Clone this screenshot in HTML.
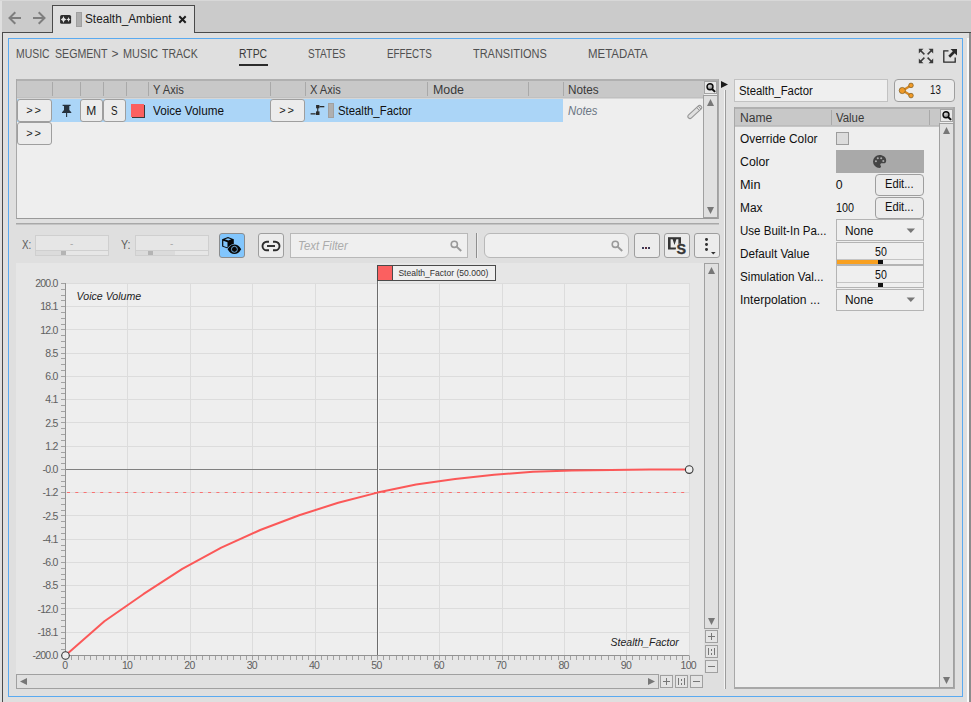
<!DOCTYPE html>
<html><head><meta charset="utf-8"><title>Stealth_Ambient - RTPC</title>
<style>
html,body{margin:0;padding:0;}
body{width:971px;height:702px;overflow:hidden;background:#dfdfdf;font-family:"Liberation Sans",sans-serif;position:relative;}
#r{position:absolute;left:0;top:0;width:971px;height:702px;overflow:hidden;}
#r div,#r svg{position:absolute;}
</style></head><body><div id="r">
<div style="left:2px;top:0px;width:969px;height:32px;background:#cbcbcb;"></div>
<div style="left:0px;top:0px;width:971px;height:1px;background:#d8d8d8;"></div>
<div style="left:2px;top:32px;width:969px;height:1px;background:#4a4a4a;"></div>
<div style="left:2px;top:32px;width:1px;height:670px;background:#4a4a4a;"></div>
<div style="left:52px;top:5px;width:143px;height:28px;background:#dfdfdf;border:1px solid #4a4a4a;border-bottom:none;box-sizing:border-box;"></div>
<div style="left:967px;top:38px;width:2px;height:664px;background:#fafafa;"></div>
<div style="left:969px;top:33px;width:2px;height:669px;background:#8c8c8c;"></div>
<div style="left:8px;top:38px;width:955px;height:659px;border:1px solid #5aaaf0;box-sizing:border-box;"></div>
<svg style="left:8px;top:10px" width="40" height="18" viewBox="0 0 40 18"><g fill="none" stroke="#7e7e7e" stroke-width="2" stroke-linecap="butt" stroke-linejoin="miter"><path d="M13 8H2M7.300 2.200L1.500 8l5.800 5.800"/><path d="M25 8h11M30.700 2.200L36.500 8l-5.800 5.800"/></g></svg>
<svg style="left:60px;top:15px" width="12" height="9" viewBox="0 0 12 9"><rect x="0.100" y="0" width="11" height="8.800" rx="1.600" fill="#2c2c2c"/><path d="M3.450 0.900Q3.950 3.900 6.300 4.450Q3.950 5 3.450 7.900Q2.950 5 0.800 4.450Q2.950 3.900 3.450 0.900Z" fill="#e2e2e2"/><path d="M8.650 2Q9 4.100 10.400 4.450Q9 4.800 8.650 6.900Q8.300 4.800 6.300 4.450Q8.300 4.100 8.650 2Z" fill="#e2e2e2"/></svg>
<div style="left:76px;top:12px;width:6px;height:15px;background:#afafaf;border:1px solid #a0a0a0;box-sizing:border-box;"></div>
<div style="left:85.30px;top:11.34px;height:16px;line-height:16px;font-size:12px;color:#1a1a1a;white-space:nowrap;transform:scaleX(0.9824);transform-origin:0 50%;">Stealth_Ambient</div>
<svg style="left:178px;top:15px" width="9" height="9" viewBox="0 0 9 9"><path d="M1.300 1.300L7.700 7.700M7.700 1.300L1.300 7.700" stroke="#1e1e1e" stroke-width="2" fill="none"/></svg>
<div style="left:16.40px;top:45.84px;height:16px;line-height:16px;font-size:12px;color:#505050;white-space:nowrap;transform:scaleX(0.8690);transform-origin:0 50%;">MUSIC</div>
<div style="left:54.50px;top:45.84px;height:16px;line-height:16px;font-size:12px;color:#505050;white-space:nowrap;transform:scaleX(0.8848);transform-origin:0 50%;">SEGMENT</div>
<div style="left:111.50px;top:45.84px;height:16px;line-height:16px;font-size:12px;color:#505050;white-space:nowrap;">&gt;</div>
<div style="left:122.60px;top:45.84px;height:16px;line-height:16px;font-size:12px;color:#505050;white-space:nowrap;transform:scaleX(0.9052);transform-origin:0 50%;">MUSIC</div>
<div style="left:162.00px;top:45.84px;height:16px;line-height:16px;font-size:12px;color:#505050;white-space:nowrap;transform:scaleX(0.8802);transform-origin:0 50%;">TRACK</div>
<div style="left:239.10px;top:45.84px;height:16px;line-height:16px;font-size:12px;color:#3a3a3a;white-space:nowrap;transform:scaleX(0.8660);transform-origin:0 50%;">RTPC</div>
<div style="left:239px;top:64px;width:29px;height:2px;background:#2b2b2b;"></div>
<div style="left:308.30px;top:45.84px;height:16px;line-height:16px;font-size:12px;color:#505050;white-space:nowrap;transform:scaleX(0.8353);transform-origin:0 50%;">STATES</div>
<div style="left:387.30px;top:45.84px;height:16px;line-height:16px;font-size:12px;color:#505050;white-space:nowrap;transform:scaleX(0.8177);transform-origin:0 50%;">EFFECTS</div>
<div style="left:473.30px;top:45.84px;height:16px;line-height:16px;font-size:12px;color:#505050;white-space:nowrap;transform:scaleX(0.9136);transform-origin:0 50%;">TRANSITIONS</div>
<div style="left:588.30px;top:45.84px;height:16px;line-height:16px;font-size:12px;color:#505050;white-space:nowrap;transform:scaleX(0.9527);transform-origin:0 50%;">METADATA</div>
<svg style="left:918px;top:48px" width="16" height="16" viewBox="0 0 16 16"><g fill="none" stroke="#3a3a3a" stroke-width="1.500"><path d="M1.500 1.500L6.400 6.400M14.500 1.500L9.600 6.400M1.500 14.500L6.400 9.600M14.500 14.500L9.600 9.600"/></g><g fill="#3a3a3a"><path d="M0.800 0.800h4.700l-4.700 4.700z"/><path d="M15.200 0.800v4.700l-4.700-4.700z"/><path d="M0.800 15.200v-4.700l4.700 4.700z"/><path d="M15.200 15.200h-4.700l4.700-4.700z"/></g></svg>
<svg style="left:942px;top:48px" width="16" height="16" viewBox="0 0 16 16"><path d="M6.500 2.800H1.800V14.200H13.200V9.500" fill="none" stroke="#2a2a2a" stroke-width="1.300"/><path d="M8.500 1H15V7.500L12.700 5.200 8.200 9.700 6.300 7.800 10.800 3.300z" fill="#2a2a2a"/></svg>
<div style="left:16px;top:79px;width:703px;height:140px;background:#eeeeee;border:1px solid #a8a8a8;border-width:1px 2px 1px 1px;border-bottom-color:#999;box-sizing:border-box;"></div>
<div style="left:17px;top:80px;width:687px;height:17px;background:#c8c8c8;"></div>
<div style="left:17px;top:97px;width:687px;height:1px;background:#c0c0c0;"></div>
<div style="left:17px;top:98px;width:687px;height:1px;background:#d6d6d6;"></div>
<div style="left:17px;top:79px;width:701px;height:2px;background:#b0b0b0;"></div>
<div style="left:52px;top:82px;width:1px;height:14px;background:#a9a9a9;"></div>
<div style="left:80px;top:82px;width:1px;height:14px;background:#a9a9a9;"></div>
<div style="left:103px;top:82px;width:1px;height:14px;background:#a9a9a9;"></div>
<div style="left:126px;top:82px;width:1px;height:14px;background:#a9a9a9;"></div>
<div style="left:148px;top:82px;width:1px;height:14px;background:#a9a9a9;"></div>
<div style="left:270px;top:82px;width:1px;height:14px;background:#a9a9a9;"></div>
<div style="left:305px;top:82px;width:1px;height:14px;background:#a9a9a9;"></div>
<div style="left:427px;top:82px;width:1px;height:14px;background:#a9a9a9;"></div>
<div style="left:528px;top:82px;width:1px;height:14px;background:#a9a9a9;"></div>
<div style="left:563px;top:82px;width:1px;height:14px;background:#a9a9a9;"></div>
<div style="left:153.30px;top:81.74px;height:16px;line-height:16px;font-size:12.3px;color:#3a3a3a;white-space:nowrap;transform:scaleX(0.9100);transform-origin:0 50%;">Y Axis</div>
<div style="left:310.20px;top:81.74px;height:16px;line-height:16px;font-size:12.3px;color:#3a3a3a;white-space:nowrap;transform:scaleX(0.9011);transform-origin:0 50%;">X Axis</div>
<div style="left:432.50px;top:81.74px;height:16px;line-height:16px;font-size:12.3px;color:#3a3a3a;white-space:nowrap;transform:scaleX(1.0076);transform-origin:0 50%;">Mode</div>
<div style="left:568.30px;top:81.74px;height:16px;line-height:16px;font-size:12.3px;color:#3a3a3a;white-space:nowrap;transform:scaleX(0.9555);transform-origin:0 50%;">Notes</div>
<div style="left:17px;top:99px;width:546px;height:23px;background:#abd5f7;"></div>
<div style="left:17px;top:99px;width:35px;height:23px;background:#ececec;border:1px solid #9e9e9e;border-radius:3px;box-sizing:border-box;"></div>
<div style="left:17px;top:122px;width:35px;height:23px;background:#ececec;border:1px solid #9e9e9e;border-radius:3px;box-sizing:border-box;"></div>
<div style="left:80px;top:99px;width:23px;height:23px;background:#ececec;border:1px solid #9e9e9e;border-radius:3px;box-sizing:border-box;"></div>
<div style="left:103px;top:99px;width:23px;height:23px;background:#ececec;border:1px solid #9e9e9e;border-radius:3px;box-sizing:border-box;"></div>
<div style="left:270px;top:99px;width:35px;height:23px;background:#ececec;border:1px solid #9e9e9e;border-radius:3px;box-sizing:border-box;"></div>
<div style="left:26.20px;top:102.99px;height:14px;line-height:14px;font-size:11px;color:#1a1a1a;white-space:nowrap;letter-spacing:1.800px;">&gt;&gt;</div>
<div style="left:26.20px;top:125.99px;height:14px;line-height:14px;font-size:11px;color:#1a1a1a;white-space:nowrap;letter-spacing:1.800px;">&gt;&gt;</div>
<div style="left:279.20px;top:102.99px;height:14px;line-height:14px;font-size:11px;color:#1a1a1a;white-space:nowrap;letter-spacing:1.800px;">&gt;&gt;</div>
<div style="left:86.30px;top:102.84px;height:16px;line-height:16px;font-size:12px;color:#1a1a1a;white-space:nowrap;">M</div>
<div style="left:111.20px;top:102.84px;height:16px;line-height:16px;font-size:12px;color:#1a1a1a;white-space:nowrap;transform:scaleX(0.82);transform-origin:0 50%;">S</div>
<svg style="left:60px;top:103px" width="13" height="15" viewBox="0 0 13 15"><path d="M2.600 1.700h8v1.400h-1.300v4l2 2.100v0.900H2V9.200l2-2.100v-4H2.600z" fill="#26323e"/><path d="M6.600 10v4" stroke="#26323e" stroke-width="1.100"/></svg>
<div style="left:132.2px;top:105.3px;width:12.6px;height:12.6px;background:#3a3a3a;"></div>
<div style="left:131.2px;top:104.3px;width:12.4px;height:12.4px;background:#fb6060;"></div>
<div style="left:153.30px;top:102.74px;height:16px;line-height:16px;font-size:12.3px;color:#101010;white-space:nowrap;transform:scaleX(0.9513);transform-origin:0 50%;">Voice Volume</div>
<svg style="left:310px;top:104px" width="16" height="12" viewBox="0 0 16 12"><g fill="#2a2a2a"><rect x="0.600" y="9.200" width="5" height="1.300"/><rect x="6.100" y="1" width="3.300" height="3.300"/><rect x="6" y="7.400" width="3.500" height="3.600"/><rect x="7.200" y="4" width="1.100" height="4"/><rect x="9.500" y="2" width="4.800" height="1.300"/></g></svg>
<div style="left:328px;top:103px;width:6px;height:15px;background:#afafaf;border:1px solid #a0a0a0;box-sizing:border-box;"></div>
<div style="left:338.30px;top:102.74px;height:16px;line-height:16px;font-size:12.3px;color:#101010;white-space:nowrap;transform:scaleX(0.9239);transform-origin:0 50%;">Stealth_Factor</div>
<div style="left:568.00px;top:102.74px;height:16px;line-height:16px;font-size:12.3px;color:#6b7684;white-space:nowrap;transform:scaleX(0.9181);transform-origin:0 50%;font-style:italic;">Notes</div>
<svg style="left:687px;top:104px" width="16" height="16" viewBox="0 0 16 16"><g fill="#e0e0e0" stroke="#969696" stroke-width="1.100" transform="rotate(-43 7.800 8)"><rect x="-0.800" y="5.900" width="17.200" height="4.200" rx="2.100"/><path d="M12.200 5.900v4.200M14.300 5.900v4.200" fill="none" stroke-width="0.900"/></g></svg>
<div style="left:704px;top:81px;width:13px;height:13px;background:#e9e9e9;border:1px solid #a4a4a4;box-sizing:border-box;"></div>
<svg style="left:705px;top:82px" width="12" height="12" viewBox="0 0 12 12"><defs><radialGradient id="lg704" cx="0.4" cy="0.35" r="0.7"><stop offset="0" stop-color="#d8d8d8"/><stop offset="1" stop-color="#777"/></radialGradient></defs><path d="M6.800 6.700l3.300 3.200" stroke="#0a0a0a" stroke-width="2"/><circle cx="5" cy="4.700" r="3" fill="url(#lg704)" stroke="#0a0a0a" stroke-width="1.400"/></svg>
<div style="left:703px;top:95px;width:15px;height:123px;background:#e0e0e0;border:1px solid #a0a0a0;box-sizing:border-box;"></div>
<svg style="left:707.0px;top:99px" width="8" height="8" viewBox="0 0 8 8"><polygon points="0,7 3.5,0 7,7" fill="#777"/></svg>
<svg style="left:707.0px;top:207px" width="8" height="8" viewBox="0 0 8 8"><polygon points="0,0 7,0 3.5,7" fill="#777"/></svg>
<svg style="left:720px;top:80px" width="9" height="10" viewBox="0 0 9 10"><polygon points="1,1 8,4.500 1,8" fill="#1a1a1a"/></svg>
<div style="left:725px;top:90px;width:1px;height:599px;background:#9c9c9c;"></div>
<div style="left:724px;top:90px;width:1px;height:599px;background:#f4f4f4;"></div>
<div style="left:16px;top:223px;width:703px;height:1px;background:#a8a8a8;"></div>
<div style="left:16px;top:224px;width:703px;height:1px;background:#c4c4c4;"></div>
<div style="left:22.00px;top:236.74px;height:16px;line-height:16px;font-size:12.3px;color:#5c5c5c;white-space:nowrap;transform:scaleX(0.8002);transform-origin:0 50%;">X:</div>
<div style="left:121.00px;top:236.74px;height:16px;line-height:16px;font-size:12.3px;color:#5c5c5c;white-space:nowrap;transform:scaleX(0.8681);transform-origin:0 50%;">Y:</div>
<div style="left:35px;top:235px;width:74px;height:21px;background:#e6e6e6;border:1px solid #cfcfcf;box-sizing:border-box;"></div>
<div style="left:35px;top:250px;width:74px;height:1px;background:#cfcfcf;"></div>
<div style="left:36px;top:251px;width:30px;height:4px;background:#dbdbdb;"></div>
<div style="left:61px;top:251px;width:5px;height:4px;background:#b4b4b4;"></div>
<div style="left:70.00px;top:236.84px;height:13px;line-height:13px;font-size:10px;color:#aaaaaa;white-space:nowrap;">-</div>
<div style="left:135px;top:235px;width:74px;height:21px;background:#e6e6e6;border:1px solid #cfcfcf;box-sizing:border-box;"></div>
<div style="left:135px;top:250px;width:74px;height:1px;background:#cfcfcf;"></div>
<div style="left:136px;top:251px;width:39px;height:4px;background:#dbdbdb;"></div>
<div style="left:148px;top:251px;width:5px;height:4px;background:#b4b4b4;"></div>
<div style="left:170.00px;top:236.84px;height:13px;line-height:13px;font-size:10px;color:#aaaaaa;white-space:nowrap;">-</div>
<div style="left:219px;top:233px;width:26px;height:25px;background:#82c6fd;border:1px solid #8a8c8e;border-radius:3px;box-sizing:border-box;"></div>
<svg style="left:221px;top:236px" width="22" height="20" viewBox="0 0 22 20"><path d="M1.100 3.200L7 1.100l5.800 2.100v5l-5.400 4.500-6.300-2.300z" fill="#080808"/><path d="M3.800 3.300L7 2.300l3.200 1-2.800 1.100z" fill="#82c6fd"/><path d="M2.300 4.700l4.200 1.500v5.400l-4.200-1.500z" fill="#82c6fd"/><path d="M6.600 13.300c2-3.400 4.200-4.700 6.800-4.700s4.800 1.300 6.800 4.700c-2 3.400-4.200 4.700-6.800 4.700s-4.800-1.300-6.800-4.700z" fill="#080808" stroke="#82c6fd" stroke-width="1.300" paint-order="stroke"/><circle cx="13.400" cy="13.300" r="3" fill="none" stroke="#82c6fd" stroke-width="0.800"/></svg>
<div style="left:258px;top:233px;width:26px;height:25px;background:#ececec;border:1px solid #9e9e9e;border-radius:3px;box-sizing:border-box;"></div>
<svg style="left:261px;top:240px" width="20" height="12" viewBox="0 0 20 12"><g fill="none" stroke="#2c2c2c" stroke-width="1.900"><path d="M8 1.700H5.800a4.300 4.300 0 0 0 0 8.600H8"/><path d="M12 1.700h2.200a4.300 4.300 0 0 1 0 8.600H12"/><path d="M6 6h8"/></g></svg>
<div style="left:290px;top:233px;width:178px;height:25px;background:#efefef;border:1px solid #b8b8b8;box-sizing:border-box;"></div>
<div style="left:297.70px;top:237.74px;height:16px;line-height:16px;font-size:12.3px;color:#ababab;white-space:nowrap;transform:scaleX(0.9302);transform-origin:0 50%;font-style:italic;">Text Filter</div>
<svg style="left:450px;top:240px" width="13" height="12" viewBox="0 0 13 12"><circle cx="4.300" cy="4.300" r="3.100" fill="none" stroke="#9a9a9a" stroke-width="1.600"/><path d="M6.600 6.600l4.600 4.400" stroke="#9a9a9a" stroke-width="2"/></svg>
<div style="left:476px;top:233px;width:1px;height:25px;background:#8e8e8e;"></div>
<div style="left:477px;top:233px;width:1px;height:25px;background:#ececec;"></div>
<div style="left:484px;top:233px;width:145px;height:25px;background:#efefef;border:1px solid #b8b8b8;border-radius:6px;box-sizing:border-box;"></div>
<svg style="left:611px;top:240px" width="13" height="12" viewBox="0 0 13 12"><circle cx="4.300" cy="4.300" r="3.100" fill="none" stroke="#9a9a9a" stroke-width="1.600"/><path d="M6.600 6.600l4.600 4.400" stroke="#9a9a9a" stroke-width="2"/></svg>
<div style="left:634px;top:233px;width:26px;height:25px;background:#ececec;border:1px solid #9e9e9e;border-radius:3px;box-sizing:border-box;"></div>
<div style="left:664px;top:233px;width:26px;height:25px;background:#ececec;border:1px solid #9e9e9e;border-radius:3px;box-sizing:border-box;"></div>
<div style="left:694px;top:233px;width:26px;height:25px;background:#ececec;border:1px solid #9e9e9e;border-radius:3px;box-sizing:border-box;"></div>
<div style="left:642.3px;top:246.8px;width:2px;height:2px;background:#3a3a5a;"></div>
<div style="left:645.3px;top:246.8px;width:2px;height:2px;background:#5a2a3a;"></div>
<div style="left:648.3px;top:246.8px;width:2px;height:2px;background:#3a3a5a;"></div>
<svg style="left:667px;top:236px" width="20" height="19" viewBox="0 0 20 19"><path d="M1 1.200h13v12.300H1z" fill="#363636"/><path d="M3.600 3.300h2l1.900 5.600 1.900-5.600h2v8.100H3.600z" fill="#ececec"/><path d="M9.500 9.500c1-2.500 7-2.500 8.500 0.500v4.500c0 4-8.500 4-9.500 0z" fill="#ececec"/><text x="9.500" y="18" font-family="Liberation Sans, sans-serif" font-weight="bold" font-size="14.400" fill="#363636" stroke="#363636" stroke-width="0.300">S</text></svg>
<div style="left:705.0px;top:238.0px;width:2.800px;height:2.800px;border-radius:50%;background:#333"></div>
<div style="left:705.0px;top:243.1px;width:2.800px;height:2.800px;border-radius:50%;background:#333"></div>
<div style="left:705.0px;top:248.2px;width:2.800px;height:2.800px;border-radius:50%;background:#333"></div>
<svg style="left:711px;top:252px" width="5" height="3" viewBox="0 0 5 3"><polygon points="0,0 4.600,0 2.300,2.600" fill="#333"/></svg>
<div style="left:16px;top:263px;width:688px;height:411px;background:#e6e6e6;"></div>
<svg style="left:0;top:0" width="971" height="702" viewBox="0 0 971 702" font-family="Liberation Sans, sans-serif"><rect x="66" y="283" width="623.500" height="372.500" fill="#eeeeee"/><path d="M127.5 283V655M190.5 283V655M252.5 283V655M315.5 283V655M377.5 283V655M439.5 283V655M502.5 283V655M564.5 283V655M626.5 283V655M689.5 283V655M66 283.5H689.500M66 306.5H689.500M66 329.5H689.500M66 353.5H689.500M66 376.5H689.500M66 399.5H689.500M66 422.5H689.500M66 446.5H689.500M66 492.5H689.500M66 515.5H689.500M66 539.5H689.500M66 562.5H689.500M66 585.5H689.500M66 608.5H689.500M66 632.5H689.500" stroke="#dcdcdc" stroke-width="1" fill="none"/><path d="M61 283.5H65M61 289.5H65M61 295.5H65M61 300.5H65M61 306.5H65M61 312.5H65M61 318.5H65M61 324.5H65M61 329.5H65M61 335.5H65M61 341.5H65M61 347.5H65M61 353.5H65M61 358.5H65M61 364.5H65M61 370.5H65M61 376.5H65M61 382.5H65M61 388.5H65M61 393.5H65M61 399.5H65M61 405.5H65M61 411.5H65M61 417.5H65M61 422.5H65M61 428.5H65M61 434.5H65M61 440.5H65M61 446.5H65M61 452.5H65M61 457.5H65M61 463.5H65M61 469.5H65M61 475.5H65M61 481.5H65M61 486.5H65M61 492.5H65M61 498.5H65M61 504.5H65M61 510.5H65M61 515.5H65M61 521.5H65M61 527.5H65M61 533.5H65M61 539.5H65M61 545.5H65M61 550.5H65M61 556.5H65M61 562.5H65M61 568.5H65M61 574.5H65M61 579.5H65M61 585.5H65M61 591.5H65M61 597.5H65M61 603.5H65M61 608.5H65M61 614.5H65M61 620.5H65M61 626.5H65M61 632.5H65M61 638.5H65M61 643.5H65M61 649.5H65M61 655.5H65M65.5 656V660M71.5 656V660M78.5 656V660M84.5 656V660M90.5 656V660M96.5 656V660M103.5 656V660M109.5 656V660M115.5 656V660M121.5 656V660M127.5 656V660M134.5 656V660M140.5 656V660M146.5 656V660M152.5 656V660M159.5 656V660M165.5 656V660M171.5 656V660M177.5 656V660M184.5 656V660M190.5 656V660M196.5 656V660M202.5 656V660M209.5 656V660M215.5 656V660M221.5 656V660M227.5 656V660M233.5 656V660M240.5 656V660M246.5 656V660M252.5 656V660M258.5 656V660M265.5 656V660M271.5 656V660M277.5 656V660M283.5 656V660M290.5 656V660M296.5 656V660M302.5 656V660M308.5 656V660M315.5 656V660M321.5 656V660M327.5 656V660M333.5 656V660M339.5 656V660M346.5 656V660M352.5 656V660M358.5 656V660M364.5 656V660M371.5 656V660M377.5 656V660M383.5 656V660M389.5 656V660M396.5 656V660M402.5 656V660M408.5 656V660M414.5 656V660M420.5 656V660M427.5 656V660M433.5 656V660M439.5 656V660M445.5 656V660M452.5 656V660M458.5 656V660M464.5 656V660M470.5 656V660M477.5 656V660M483.5 656V660M489.5 656V660M495.5 656V660M502.5 656V660M508.5 656V660M514.5 656V660M520.5 656V660M526.5 656V660M533.5 656V660M539.5 656V660M545.5 656V660M551.5 656V660M558.5 656V660M564.5 656V660M570.5 656V660M576.5 656V660M583.5 656V660M589.5 656V660M595.5 656V660M601.5 656V660M608.5 656V660M614.5 656V660M620.5 656V660M626.5 656V660M632.5 656V660M639.5 656V660M645.5 656V660M651.5 656V660M657.5 656V660M664.5 656V660M670.5 656V660M676.5 656V660M682.5 656V660M689.5 656V660" stroke="#a2a2a2" stroke-width="1" fill="none"/><path d="M65.500 283V655.500H689.500" stroke="#939393" stroke-width="1" fill="none"/><path d="M66 469.500H689" stroke="#808080" stroke-width="1" fill="none"/><path d="M378.500 281V655" stroke="#f4f4f4" stroke-width="1" fill="none"/><path d="M377.500 281V655" stroke="#6c6c6c" stroke-width="1" fill="none"/><path d="M67 492.500H689" stroke="#fa7070" stroke-width="1.150" stroke-dasharray="3 5.300" fill="none"/><polyline points="65.4,655.4 104.4,621.3 143.3,594.2 182.3,568.8 221.3,547.7 260.2,530.0 299.2,515.2 338.2,502.8 377.5,492.6 416.1,484.5 455.1,479.0 494.1,474.8 533,471.7 572,470.6 611,469.9 650,469.6 689,469.6" fill="none" stroke="#fb5858" stroke-width="2" stroke-linejoin="round"/><circle cx="65.5" cy="655.5" r="3.800" fill="#eeeeee" stroke="#3a3a3a" stroke-width="1.100"/><circle cx="689.2" cy="469.6" r="3.800" fill="#eeeeee" stroke="#3a3a3a" stroke-width="1.100"/><text x="57.7" y="287.1" text-anchor="end" font-size="10.5" fill="#606060" letter-spacing="-0.75">200.0</text><text x="57.7" y="310.4" text-anchor="end" font-size="10.5" fill="#606060" letter-spacing="-0.75">18.1</text><text x="57.7" y="333.6" text-anchor="end" font-size="10.5" fill="#606060" letter-spacing="-0.75">12.0</text><text x="57.7" y="356.9" text-anchor="end" font-size="10.5" fill="#606060" letter-spacing="-0.75">8.5</text><text x="57.7" y="380.1" text-anchor="end" font-size="10.5" fill="#606060" letter-spacing="-0.75">6.0</text><text x="57.7" y="403.4" text-anchor="end" font-size="10.5" fill="#606060" letter-spacing="-0.75">4.1</text><text x="57.7" y="426.6" text-anchor="end" font-size="10.5" fill="#606060" letter-spacing="-0.75">2.5</text><text x="57.7" y="449.9" text-anchor="end" font-size="10.5" fill="#606060" letter-spacing="-0.75">1.2</text><text x="57.7" y="473.1" text-anchor="end" font-size="10.5" fill="#606060" letter-spacing="-0.75">-0.0</text><text x="57.7" y="496.4" text-anchor="end" font-size="10.5" fill="#606060" letter-spacing="-0.75">-1.2</text><text x="57.7" y="519.7" text-anchor="end" font-size="10.5" fill="#606060" letter-spacing="-0.75">-2.5</text><text x="57.7" y="542.9" text-anchor="end" font-size="10.5" fill="#606060" letter-spacing="-0.75">-4.1</text><text x="57.7" y="566.2" text-anchor="end" font-size="10.5" fill="#606060" letter-spacing="-0.75">-6.0</text><text x="57.7" y="589.4" text-anchor="end" font-size="10.5" fill="#606060" letter-spacing="-0.75">-8.5</text><text x="57.7" y="612.7" text-anchor="end" font-size="10.5" fill="#606060" letter-spacing="-0.75">-12.0</text><text x="57.7" y="635.9" text-anchor="end" font-size="10.5" fill="#606060" letter-spacing="-0.75">-18.1</text><text x="57.7" y="659.2" text-anchor="end" font-size="10.5" fill="#606060" letter-spacing="-0.75">-200.0</text><text x="64.7" y="668.7" text-anchor="middle" font-size="10.5" fill="#606060" letter-spacing="-0.75">0</text><text x="127.0" y="668.7" text-anchor="middle" font-size="10.5" fill="#606060" letter-spacing="-0.75">10</text><text x="189.4" y="668.7" text-anchor="middle" font-size="10.5" fill="#606060" letter-spacing="-0.75">20</text><text x="251.8" y="668.7" text-anchor="middle" font-size="10.5" fill="#606060" letter-spacing="-0.75">30</text><text x="314.1" y="668.7" text-anchor="middle" font-size="10.5" fill="#606060" letter-spacing="-0.75">40</text><text x="376.4" y="668.7" text-anchor="middle" font-size="10.5" fill="#606060" letter-spacing="-0.75">50</text><text x="438.8" y="668.7" text-anchor="middle" font-size="10.5" fill="#606060" letter-spacing="-0.75">60</text><text x="501.1" y="668.7" text-anchor="middle" font-size="10.5" fill="#606060" letter-spacing="-0.75">70</text><text x="563.5" y="668.7" text-anchor="middle" font-size="10.5" fill="#606060" letter-spacing="-0.75">80</text><text x="625.9" y="668.7" text-anchor="middle" font-size="10.5" fill="#606060" letter-spacing="-0.75">90</text><text x="688.2" y="668.7" text-anchor="middle" font-size="10.5" fill="#606060" letter-spacing="-0.75">100</text><text x="76.6" y="299.8" text-anchor="start" font-size="10.8" fill="#222" textLength="64.6" lengthAdjust="spacingAndGlyphs" font-style="italic">Voice Volume</text><text x="610.6" y="645.6" text-anchor="start" font-size="10.8" fill="#222" textLength="68.2" lengthAdjust="spacingAndGlyphs" font-style="italic">Stealth_Factor</text><rect x="377.500" y="265.500" width="118" height="15" fill="#efefef" stroke="#4a4a4a" stroke-width="1"/><rect x="378" y="266" width="14" height="14" fill="#fb6060"/><path d="M392.500 266V280" stroke="#4a4a4a" stroke-width="1"/><text x="398.4" y="276.3" text-anchor="start" font-size="9.4" fill="#333" textLength="90" lengthAdjust="spacingAndGlyphs">Stealth_Factor (50.000)</text></svg>
<div style="left:704px;top:263px;width:15px;height:366px;background:#e0e0e0;border:1px solid #a0a0a0;box-sizing:border-box;"></div>
<svg style="left:708.0px;top:267px" width="8" height="8" viewBox="0 0 8 8"><polygon points="0,7 3.5,0 7,7" fill="#777"/></svg>
<svg style="left:708.0px;top:618px" width="8" height="8" viewBox="0 0 8 8"><polygon points="0,0 7,0 3.5,7" fill="#777"/></svg>
<div style="left:705px;top:630px;width:13px;height:13px;background:#e4e4e4;border:1px solid #a0a0a0;box-sizing:border-box;"></div>
<div style="left:708px;top:636px;width:7px;height:1px;background:#777;"></div>
<div style="left:711px;top:633px;width:1px;height:7px;background:#777;"></div>
<div style="left:705px;top:645px;width:13px;height:13px;background:#e4e4e4;border:1px solid #a0a0a0;box-sizing:border-box;"></div>
<div style="left:708px;top:648px;width:1px;height:7px;background:#777;"></div>
<div style="left:714px;top:648px;width:1px;height:7px;background:#777;"></div>
<div style="left:711px;top:649px;width:1px;height:2px;background:#777;"></div>
<div style="left:711px;top:653px;width:1px;height:2px;background:#777;"></div>
<div style="left:705px;top:660px;width:13px;height:13px;background:#e4e4e4;border:1px solid #a0a0a0;box-sizing:border-box;"></div>
<div style="left:708px;top:666px;width:7px;height:1px;background:#777;"></div>
<div style="left:16px;top:674px;width:643px;height:15px;background:#e0e0e0;border:1px solid #a0a0a0;box-sizing:border-box;"></div>
<svg style="left:20px;top:678px" width="8" height="8" viewBox="0 0 8 8"><polygon points="7,0 7,7 0,3.5" fill="#777"/></svg>
<svg style="left:648px;top:678px" width="8" height="8" viewBox="0 0 8 8"><polygon points="0,0 7,3.5 0,7" fill="#777"/></svg>
<div style="left:660px;top:675px;width:13px;height:13px;background:#e4e4e4;border:1px solid #a0a0a0;box-sizing:border-box;"></div>
<div style="left:663px;top:681px;width:7px;height:1px;background:#777;"></div>
<div style="left:666px;top:678px;width:1px;height:7px;background:#777;"></div>
<div style="left:675px;top:675px;width:13px;height:13px;background:#e4e4e4;border:1px solid #a0a0a0;box-sizing:border-box;"></div>
<div style="left:678px;top:678px;width:1px;height:7px;background:#777;"></div>
<div style="left:684px;top:678px;width:1px;height:7px;background:#777;"></div>
<div style="left:681px;top:679px;width:1px;height:2px;background:#777;"></div>
<div style="left:681px;top:683px;width:1px;height:2px;background:#777;"></div>
<div style="left:690px;top:675px;width:13px;height:13px;background:#e4e4e4;border:1px solid #a0a0a0;box-sizing:border-box;"></div>
<div style="left:693px;top:681px;width:7px;height:1px;background:#777;"></div>
<div style="left:734px;top:79px;width:154px;height:23px;background:#efefef;border:1px solid #c2c2c2;box-sizing:border-box;"></div>
<div style="left:739.20px;top:82.74px;height:16px;line-height:16px;font-size:12.3px;color:#101010;white-space:nowrap;transform:scaleX(0.9227);transform-origin:0 50%;">Stealth_Factor</div>
<div style="left:894px;top:79px;width:61px;height:23px;background:#ececec;border:1px solid #9e9e9e;border-radius:3px;box-sizing:border-box;border-radius:4px;"></div>
<svg style="left:898px;top:82px" width="18" height="17" viewBox="0 0 18 17"><g stroke="#7a5a20" stroke-width="0.700" fill="#f09a28"><path d="M4.800 8.500L12.800 3.500M4.800 8.500L12.800 13.500" stroke="#d88a24" stroke-width="2.300" fill="none"/><circle cx="4.300" cy="8.500" r="3.100"/><circle cx="13" cy="3.400" r="2.300"/><circle cx="13" cy="13.600" r="2.300"/></g></svg>
<div style="left:930.00px;top:81.94px;height:16px;line-height:16px;font-size:12.3px;color:#1a1a1a;white-space:nowrap;transform:scaleX(0.7895);transform-origin:0 50%;">13</div>
<div style="left:734px;top:107px;width:221px;height:582px;background:#eeeeee;border:1px solid #a8a8a8;border-width:1px 2px 2px 1px;box-sizing:border-box;"></div>
<div style="left:735px;top:108px;width:205px;height:17px;background:#c8c8c8;"></div>
<div style="left:735px;top:125px;width:205px;height:1px;background:#bcbcbc;"></div>
<div style="left:735px;top:126px;width:205px;height:1px;background:#c6c6c6;"></div>
<div style="left:735px;top:107px;width:218px;height:2px;background:#b0b0b0;"></div>
<div style="left:831px;top:110px;width:1px;height:15px;background:#a9a9a9;"></div>
<div style="left:929px;top:110px;width:1px;height:15px;background:#a9a9a9;"></div>
<div style="left:740.00px;top:109.74px;height:16px;line-height:16px;font-size:12.3px;color:#3a3a3a;white-space:nowrap;transform:scaleX(0.9845);transform-origin:0 50%;">Name</div>
<div style="left:836.20px;top:109.74px;height:16px;line-height:16px;font-size:12.3px;color:#3a3a3a;white-space:nowrap;transform:scaleX(0.9265);transform-origin:0 50%;">Value</div>
<div style="left:940px;top:109px;width:13px;height:13px;background:#e9e9e9;border:1px solid #a4a4a4;box-sizing:border-box;"></div>
<svg style="left:941px;top:110px" width="12" height="12" viewBox="0 0 12 12"><defs><radialGradient id="lg940" cx="0.4" cy="0.35" r="0.7"><stop offset="0" stop-color="#d8d8d8"/><stop offset="1" stop-color="#777"/></radialGradient></defs><path d="M6.800 6.700l3.300 3.200" stroke="#0a0a0a" stroke-width="2"/><circle cx="5" cy="4.700" r="3" fill="url(#lg940)" stroke="#0a0a0a" stroke-width="1.400"/></svg>
<div style="left:939px;top:123px;width:15px;height:565px;background:#e0e0e0;border:1px solid #a0a0a0;box-sizing:border-box;"></div>
<svg style="left:943.0px;top:127px" width="8" height="8" viewBox="0 0 8 8"><polygon points="0,7 3.5,0 7,7" fill="#777"/></svg>
<svg style="left:943.0px;top:677px" width="8" height="8" viewBox="0 0 8 8"><polygon points="0,0 7,0 3.5,7" fill="#777"/></svg>
<div style="left:740.00px;top:130.94px;height:16px;line-height:16px;font-size:12.3px;color:#101010;white-space:nowrap;transform:scaleX(0.9691);transform-origin:0 50%;">Override Color</div>
<div style="left:740.00px;top:153.99px;height:16px;line-height:16px;font-size:12.3px;color:#101010;white-space:nowrap;">Color</div>
<div style="left:740.00px;top:177.04px;height:16px;line-height:16px;font-size:12.3px;color:#101010;white-space:nowrap;transform:scaleX(1.0344);transform-origin:0 50%;">Min</div>
<div style="left:740.00px;top:200.09px;height:16px;line-height:16px;font-size:12.3px;color:#101010;white-space:nowrap;transform:scaleX(0.9683);transform-origin:0 50%;">Max</div>
<div style="left:740.00px;top:223.14px;height:16px;line-height:16px;font-size:12.3px;color:#101010;white-space:nowrap;transform:scaleX(0.9373);transform-origin:0 50%;">Use Built-In Pa...</div>
<div style="left:740.00px;top:246.19px;height:16px;line-height:16px;font-size:12.3px;color:#101010;white-space:nowrap;transform:scaleX(0.9530);transform-origin:0 50%;">Default Value</div>
<div style="left:740.00px;top:269.24px;height:16px;line-height:16px;font-size:12.3px;color:#101010;white-space:nowrap;transform:scaleX(0.9493);transform-origin:0 50%;">Simulation Val...</div>
<div style="left:740.00px;top:292.29px;height:16px;line-height:16px;font-size:12.3px;color:#101010;white-space:nowrap;transform:scaleX(0.9833);transform-origin:0 50%;">Interpolation ...</div>
<div style="left:836.3px;top:132.3px;width:12.5px;height:12.5px;background:#dcdcdc;border:1px solid #9c9c9c;box-sizing:border-box;"></div>
<div style="left:836px;top:150px;width:88px;height:23px;background:#a9a9a9;"></div>
<svg style="left:872px;top:154px" width="15" height="15" viewBox="0 0 15 15"><path d="M7.500 1A6.500 6.500 0 0 0 7.500 14c0.900 0 1.500-0.600 1.500-1.400 0-0.400-0.200-0.700-0.400-1-0.200-0.300-0.300-0.600-0.300-0.900 0-0.800 0.600-1.400 1.400-1.400h1.600A2.900 2.900 0 0 0 14.200 6.400C14.200 3.400 11.200 1 7.500 1z" fill="#444"/><g fill="#a9a9a9"><circle cx="3.900" cy="7.300" r="1.050"/><circle cx="5.800" cy="4.200" r="1.050"/><circle cx="9.200" cy="4.200" r="1.050"/><circle cx="11.300" cy="7" r="1.050"/></g></svg>
<div style="left:835.80px;top:176.94px;height:16px;line-height:16px;font-size:12.3px;color:#101010;white-space:nowrap;">0</div>
<div style="left:836.20px;top:199.94px;height:16px;line-height:16px;font-size:12.3px;color:#101010;white-space:nowrap;transform:scaleX(0.8772);transform-origin:0 50%;">100</div>
<div style="left:875px;top:174px;width:49px;height:22px;background:#ececec;border:1px solid #9e9e9e;border-radius:3px;box-sizing:border-box;border-radius:4px;"></div>
<div style="left:875px;top:197px;width:49px;height:22px;background:#ececec;border:1px solid #9e9e9e;border-radius:3px;box-sizing:border-box;border-radius:4px;"></div>
<div style="left:885.30px;top:176.34px;height:16px;line-height:16px;font-size:12.3px;color:#101010;white-space:nowrap;transform:scaleX(0.9063);transform-origin:0 50%;">Edit...</div>
<div style="left:885.30px;top:199.34px;height:16px;line-height:16px;font-size:12.3px;color:#101010;white-space:nowrap;transform:scaleX(0.9063);transform-origin:0 50%;">Edit...</div>
<div style="left:836px;top:219px;width:88px;height:22px;background:#efefef;border:1px solid #b4b4b4;box-sizing:border-box;"></div>
<div style="left:844.60px;top:222.54px;height:16px;line-height:16px;font-size:12px;color:#101010;white-space:nowrap;transform:scaleX(0.9900);transform-origin:0 50%;">None</div>
<svg style="left:906px;top:227.7px" width="10" height="6" viewBox="0 0 10 6"><polygon points="0.600,0.500 9,0.500 4.800,4.900" fill="#777"/></svg>
<div style="left:836px;top:289px;width:88px;height:22px;background:#efefef;border:1px solid #b4b4b4;box-sizing:border-box;"></div>
<div style="left:844.60px;top:291.74px;height:16px;line-height:16px;font-size:12px;color:#101010;white-space:nowrap;transform:scaleX(0.9900);transform-origin:0 50%;">None</div>
<svg style="left:906px;top:296.9px" width="10" height="6" viewBox="0 0 10 6"><polygon points="0.600,0.500 9,0.500 4.800,4.900" fill="#777"/></svg>
<div style="left:836px;top:242px;width:88px;height:23px;background:#efefef;border:1px solid #b4b4b4;box-sizing:border-box;"></div>
<div style="left:837px;top:259px;width:86px;height:1px;background:#c4c4c4;"></div>
<div style="left:837px;top:260px;width:42px;height:4px;background:#f8a020;"></div>
<div style="left:878px;top:260px;width:5px;height:4px;background:#111;"></div>
<div style="left:874.60px;top:244.04px;height:16px;line-height:16px;font-size:12.3px;color:#101010;white-space:nowrap;transform:scaleX(0.8626);transform-origin:0 50%;">50</div>
<div style="left:836px;top:265px;width:88px;height:23px;background:#efefef;border:1px solid #b4b4b4;box-sizing:border-box;"></div>
<div style="left:837px;top:282px;width:86px;height:1px;background:#c4c4c4;"></div>
<div style="left:878px;top:283px;width:5px;height:4px;background:#111;"></div>
<div style="left:874.60px;top:267.04px;height:16px;line-height:16px;font-size:12.3px;color:#101010;white-space:nowrap;transform:scaleX(0.8626);transform-origin:0 50%;">50</div>
</div></body></html>
